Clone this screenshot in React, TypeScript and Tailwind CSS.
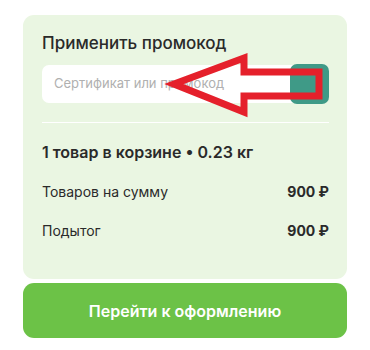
import React from 'react';

const font = { fontFamily: 'Inter, "Noto Sans", sans-serif' };

export default function App() {
  return (
    <div className="relative w-[370px] h-[350px] bg-white" style={font}>
      <div className="px-[23px] pt-[15px]">
        {/* Promo card */}
        <div className="rounded-[11px] bg-[#eaf6e2] pl-[19px] pr-[18px] pt-[16px] pb-[38px] text-[#2a2a2a]">
          <h2 className="text-[17px] leading-[24px] font-medium">Применить промокод</h2>
          <div className="mt-[10px] flex h-[38px] items-stretch rounded-[7px] bg-white">
            <input
              placeholder="Сертификат или промокод"
              className="min-w-0 flex-1 bg-transparent pl-[12px] text-[13px] text-[#2a2a2a] placeholder:text-[#b0b0b0] outline-none"
            />
            <button className="w-[39px] -my-[1px] rounded-[7px] bg-[#3f9a87]" aria-label="Применить" />
          </div>

          <div className="mt-[19px] h-px bg-white" />

          <div className="mt-[17px] text-[16px] leading-[24px] font-semibold">
            1 товар в корзине • 0.23 кг
          </div>
          <div className="mt-[18px] flex items-center justify-between text-[14px] leading-[20px]">
            <span>Товаров на сумму</span>
            <span className="font-bold">900 ₽</span>
          </div>
          <div className="mt-[19px] flex items-center justify-between text-[14px] leading-[20px]">
            <span>Подытог</span>
            <span className="font-bold">900 ₽</span>
          </div>
        </div>

        <button className="mt-[4px] flex h-[55px] w-full items-center justify-center rounded-[11px] bg-[#6cc247] text-[16px] font-semibold text-white">
          Перейти к оформлению
        </button>
      </div>

      {/* annotation arrow drawn over the screenshot */}
      <svg className="pointer-events-none absolute left-0 top-0" width="370" height="350">
        <path
          d="M174 84 L244 58 L244 72 L319 72 L319 96 L244 96 L244 112 Z"
          fill="none"
          stroke="#e5202b"
          strokeWidth="7"
          strokeLinejoin="miter"
        />
      </svg>
    </div>
  );
}
